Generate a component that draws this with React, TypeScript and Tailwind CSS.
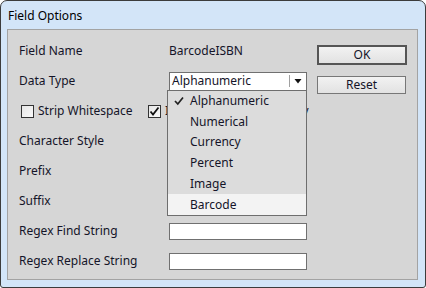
import React from "react";

const labelCls = "w-[150px] shrink-0";

function Checkbox({ checked }: { checked?: boolean }) {
  return (
    <span className="w-[13px] h-[13px] shrink-0 border border-[#333] bg-gradient-to-br from-[#e6e6e6] to-[#fafafa] flex items-center justify-center">
      {checked && (
        <svg width="11" height="11" viewBox="0 0 11 11">
          <path d="M1.5 5.5 L4 8.5 L9.5 1.5" stroke="#111" strokeWidth="1.8" fill="none" />
        </svg>
      )}
    </span>
  );
}

function Row({ label, children }: { label: string; children?: React.ReactNode }) {
  return (
    <div className="h-[30px] flex items-center">
      <span className={labelCls}>{label}</span>
      {children}
    </div>
  );
}

const options = ["Alphanumeric", "Numerical", "Currency", "Percent", "Image", "Barcode"];

export default function App() {
  return (
    <div
      className="w-[426px] h-[288px] bg-white text-[12px] text-[#141428]"
      style={{ fontFamily: '"Noto Sans", "Liberation Sans", sans-serif' }}
    >
      <div className="w-full h-full flex flex-col rounded-t-[7px] rounded-b-[3px] border border-[#3c3c3c] bg-[#d3e5f8]">
        <div className="h-[28px] px-[7px] pt-px flex items-center text-black">Field Options</div>
        <div className="flex-1 ml-[6px] mr-[7px] mb-[7px] border border-[#a3a3a3] bg-[#d6d6d6] flex">
          <div className="w-[310px] pl-[11px] pt-[6px] flex flex-col">
            <Row label="Field Name">
              <span>BarcodeISBN</span>
            </Row>
            <Row label="Data Type">
              <div className="relative">
                <div className="w-[138px] h-[19px] border border-[#707070] bg-white flex items-center pl-[2px]">
                  <span className="flex-1">Alphanumeric</span>
                  <span className="w-px h-[12px] bg-[#a0a0a0]" />
                  <svg width="16" height="8" viewBox="0 0 16 8">
                    <path d="M4.5 2 L11.5 2 L8 6.5 Z" fill="#111" />
                  </svg>
                </div>
                <div className="absolute z-10 top-[18px] left-[-2px] w-[140px] border border-[#6e6e6e] bg-[#dcdcdc] flex flex-col">
                  {options.map((o, i) => (
                    <div
                      key={o}
                      className={`h-[20.8px] flex items-center ${i === 5 ? "bg-[#f3f3f3]" : ""}`}
                    >
                      <span className="w-[22px] flex justify-center">
                        {i === 0 && (
                          <svg width="10" height="10" viewBox="0 0 10 10">
                            <path d="M1 5 L3.8 8 L9 1.5" stroke="#222" strokeWidth="1.7" fill="none" />
                          </svg>
                        )}
                      </span>
                      <span>{o}</span>
                    </div>
                  ))}
                </div>
              </div>
            </Row>
            <div className="h-[30px] flex items-center">
              <div className="w-[129px] pl-[2px] flex items-center gap-[4px]">
                <Checkbox />
                <span>Strip Whitespace</span>
              </div>
              <Checkbox checked />
              <span className="ml-[4px] whitespace-nowrap">Include Check Digits Only</span>
            </div>
            <Row label="Character Style" />
            <Row label="Prefix" />
            <Row label="Suffix" />
            <Row label="Regex Find String">
              <div className="w-[138px] h-[17px] border border-[#707070] bg-white" />
            </Row>
            <Row label="Regex Replace String">
              <div className="w-[138px] h-[17px] border border-[#707070] bg-white" />
            </Row>
          </div>
          <div className="ml-auto mr-[10px] pt-[15px] flex flex-col gap-[11px]">
            <button className="w-[90px] h-[20px] border-2 border-[#555] bg-gradient-to-b from-[#f2f2f2] to-[#e2e2e2] flex items-center justify-center">
              OK
            </button>
            <button className="w-[89px] h-[18px] border border-[#777] bg-gradient-to-b from-[#f2f2f2] to-[#e2e2e2] flex items-center justify-center">
              Reset
            </button>
          </div>
        </div>
      </div>
    </div>
  );
}
